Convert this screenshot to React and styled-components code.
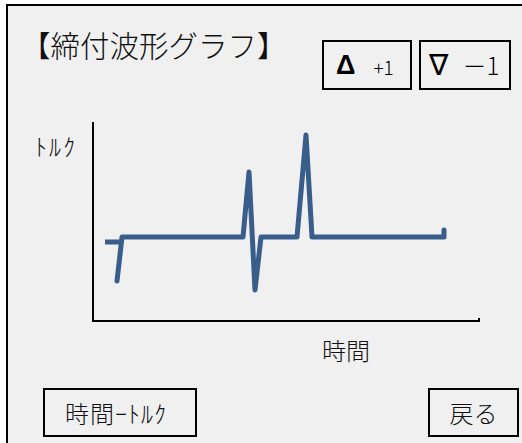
import React from "react";
import styled, { createGlobalStyle } from "styled-components";

const Global = createGlobalStyle`
  html, body { margin: 0; padding: 0; background: #ffffff; overflow: hidden; }
  body { font-family: "Noto Sans CJK JP", "Noto Sans", sans-serif; color: #111; }
`;

const Frame = styled.div`
  margin: 4px 0 0 6px;
  width: 516px;
  height: 439px;
  box-sizing: border-box;
  border-left: 2px solid #000;
  border-top: 2px solid #000;
  background: #f0f0f0;
  display: flex;
  flex-direction: column;
`;

const Header = styled.div`
  display: flex;
  align-items: flex-start;
  height: 84px;
  box-sizing: border-box;
  padding: 23px 11px 0 13px;
`;

const Title = styled.h1`
  margin: 0;
  font-size: 29.5px;
  line-height: 30px;
  font-weight: 300;
  white-space: nowrap;
`;

const ButtonGroup = styled.div`
  margin-left: auto;
  margin-top: 11px;
  display: flex;
  gap: 7px;
`;

const StepButton = styled.button`
  width: ${(p) => p.$w}px;
  height: 50px;
  box-sizing: border-box;
  border: 2px solid #000;
  background: #f0f0f0;
  padding: 0 0 0 ${(p) => p.$pad}px;
  display: flex;
  align-items: center;
  gap: ${(p) => p.$gap}px;
  color: #000;
  cursor: pointer;
`;

const Sym = styled.span`
  font-family: ${(p) => p.$font}, sans-serif;
  font-size: ${(p) => p.$size}px;
  font-weight: ${(p) => p.$weight};
  line-height: 1;
`;

const Num = styled.span`
  font-family: "Noto Sans CJK JP", sans-serif;
  font-size: ${(p) => p.$size}px;
  font-weight: 300;
  line-height: 1;
  margin-top: ${(p) => p.$dy || 0}px;
`;

const Chart = styled.div`
  margin-top: 30px;
  display: flex;
`;

const YLabel = styled.div`
  width: 84px;
  box-sizing: border-box;
  padding: 14px 0 0 27px;
  font-size: 24px;
  line-height: 24px;
  font-weight: 300;
  letter-spacing: 2px;
`;

const Plot = styled.svg`
  display: block;
  width: 392px;
  height: 206px;
`;

const XLabel = styled.div`
  margin-top: 12px;
  padding-left: 314px;
  font-size: 24px;
  line-height: 24px;
  font-weight: 300;
`;

const Footer = styled.div`
  margin-top: 26px;
  display: flex;
  justify-content: space-between;
  padding: 0 3px 0 35px;
`;

const FooterButton = styled.button`
  width: ${(p) => p.$w}px;
  height: 49px;
  box-sizing: border-box;
  border: 2px solid #000;
  background: #f0f0f0;
  padding: 0 ${(p) => p.$shift || 0}px 0 0;
  display: flex;
  align-items: center;
  justify-content: center;
  font-family: "Noto Sans CJK JP", sans-serif;
  font-size: 24px;
  font-weight: 300;
  letter-spacing: ${(p) => p.$ls || 0}px;
  color: #111;
  cursor: pointer;
`;

const WAVE = "#3a5e8c";

export default function App() {
  return (
    <>
      <Global />
      <Frame>
        <Header>
          <Title>【締付波形グラフ】</Title>
          <ButtonGroup>
            <StepButton $w={90} $pad={12} $gap={18}>
              <Sym $font={'"Liberation Sans"'} $size={27} $weight={700}>Δ</Sym>
              <Num $size={19} $dy={3}>+1</Num>
            </StepButton>
            <StepButton $w={92} $pad={8} $gap={14}>
              <Sym $font={'"DejaVu Sans"'} $size={29} $weight={400}>∇</Sym>
              <Num $size={24}>－1</Num>
            </StepButton>
          </ButtonGroup>
        </Header>

        <Chart>
          <YLabel>ﾄﾙｸ</YLabel>
          <Plot viewBox="0 0 392 206">
            <path d="M1 2 V201 H387 V198" fill="none" stroke="#000" strokeWidth="2" />
            <path d="M13 122 H29" fill="none" stroke={WAVE} strokeWidth="5" />
            <path
              d="M25 161 L30 117 L151 117 L157 52 L163 170 L169 117 L205 117 L214 15 L220 117 L352 117 V110"
              fill="none"
              stroke={WAVE}
              strokeWidth="5"
              strokeLinejoin="round"
              strokeLinecap="round"
            />
          </Plot>
        </Chart>
        <XLabel>時間</XLabel>

        <Footer>
          <FooterButton $w={154} $shift={8} $ls={1}>時間ｰﾄﾙｸ</FooterButton>
          <FooterButton $w={91}>戻る</FooterButton>
        </Footer>
      </Frame>
    </>
  );
}
